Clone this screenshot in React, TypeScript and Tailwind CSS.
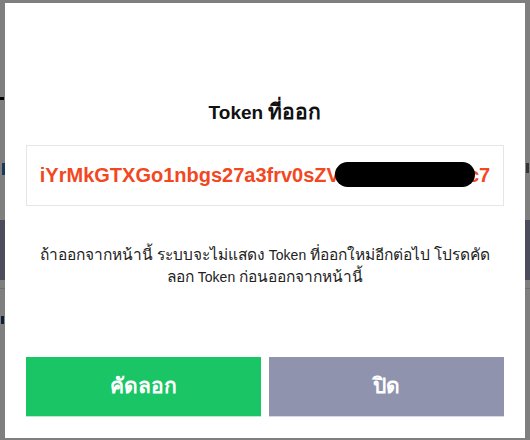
import React from "react";

export default function App() {
  return (
    <div
      className="relative h-[440px] w-[530px] overflow-hidden bg-white"
      style={{ fontFamily: '"Liberation Sans", Arial, "Noto Sans", sans-serif' }}
    >
      {/* page content behind the overlay */}
      <div className="flex flex-col">
        <div className="h-[97px]" />
        <div className="h-[3px] w-[4px] bg-black" />
        <div className="h-[63px]" />
        <div className="flex justify-between">
          <div className="ml-[2px] h-[12px] w-[3px] bg-[#3b6fb8]" />
          <div className="mr-[1px] h-[10px] w-[3px] bg-[#6b6b6b]" />
        </div>
        <div className="h-[45px]" />
        <div className="h-[60px] w-full bg-[#969ab8]" />
        <div className="h-[8px]" />
        <div className="h-px w-full bg-[#dcdcdc]" />
        <div className="h-[27px]" />
        <div className="ml-[1px] h-[8px] w-[3px] bg-[#1e3a6b]" />
      </div>

      {/* overlay */}
      <div className="absolute inset-0 flex items-center justify-center bg-black/50">
        <div className="flex h-[435px] w-[520px] flex-col bg-white px-[21px] pb-[21px] pt-[97px]">
          <div className="text-center text-[19px] font-bold leading-[24px] text-[#111]">
            Token <span className="text-[21px]">ที่ออก</span>
          </div>
          <div className="mt-[20px] flex h-[61px] items-center justify-center border border-[#e6e6e6]">
            <div className="flex items-center text-[20px] font-bold leading-[24px] text-[#f2471f]">
              <span>iYrMkGTXGo1nbgs27a3frv0sZV</span>
              <span className="relative inline-block h-[24px] w-[128px]">
                <span className="absolute left-[-5px] top-[-1px] h-[25px] w-[140px] rounded-full bg-black" />
              </span>
              <span>c7</span>
            </div>
          </div>
          <p className="mt-[38px] text-center text-[14px] leading-[22px] text-[#222]">
            <span className="text-[15.5px]">ถ้าออกจากหน้านี้ ระบบจะไม่แสดง</span> Token{" "}
            <span className="text-[15.5px]">ที่ออกใหม่อีกต่อไป โปรดคัด</span>
            <br />
            <span className="text-[15.5px]">ลอก</span> Token{" "}
            <span className="text-[15.5px]">ก่อนออกจากหน้านี้</span>
          </p>
          <div className="mt-auto flex gap-[8px]">
            <button className="flex h-[60px] flex-1 items-center justify-center border-b border-[#b8ecc9] bg-[#19c565] text-[21px] font-bold text-white">
              คัดลอก
            </button>
            <button className="flex h-[60px] flex-1 items-center justify-center border-b border-[#d6d8e3] bg-[#8f93ae] text-[21px] font-bold text-white">
              ปิด
            </button>
          </div>
        </div>
      </div>
    </div>
  );
}
